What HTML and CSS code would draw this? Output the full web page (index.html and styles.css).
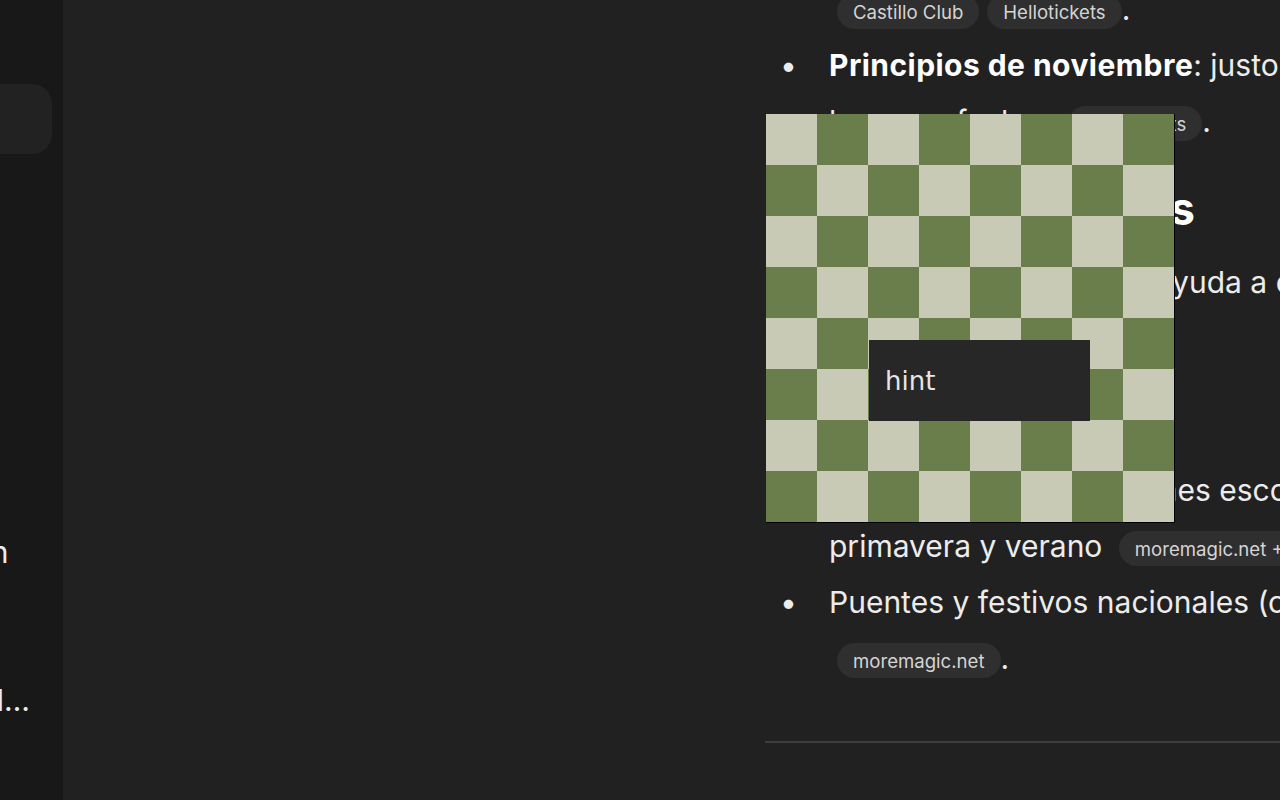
FILE: index.html
```html
<!DOCTYPE html>
<html lang="es">
<head>
<meta charset="utf-8">
<title>Chat</title>
<link rel="stylesheet" href="styles.css">
</head>
<body>
<div class="app">
  <aside class="sidebar">
    <div class="side-top"></div>
    <div class="side-item active">Chats</div>
    <div class="history">
      <div class="side-item">Organización</div>
      <div class="side-item">Ideas</div>
      <div class="side-item">Resumen del viaje a Madrid en octubre</div>
    </div>
  </aside>
  <main class="main">
    <div class="thread">
      <ul class="list">
        <li><div class="li-body"><strong>Finales de octubre</strong>: Halloween y eventos temáticos<br><span class="chip">Castillo Club</span><span class="chip">Hellotickets</span>.</div></li>
        <li><div class="li-body"><strong>Principios de noviembre</strong>: justo después de Halloween, hay menos gente en<br>las once fechas <span class="chip">Hellotickets</span>.</div></li>
      </ul>
      <h2 class="heading">Mejores momentos</h2>
      <p class="para">Reservarlas con antelación ayuda a evitar las colas más largas y<br>conseguir mejores precios.</p>
      <p class="para"><strong>Evita, si puedes:</strong></p>
      <ul class="list">
        <li><div class="li-body">Semana Santa, vacaciones escolares de<br>primavera y verano <span class="chip">moremagic.net +1</span></div></li>
        <li><div class="li-body">Puentes y festivos nacionales (como el 12 de octubre o el 6 de diciembre)<br><span class="chip">moremagic.net</span>.</div></li>
      </ul>
      <div class="rule"></div>
    </div>
  </main>
  <div class="board">
    <div class="hint">hint</div>
  </div>
</div>
</body>
</html>
```

FILE: styles.css
```css
*, *::before, *::after { box-sizing: border-box; }
html, body { margin: 0; height: 100%; }
body {
  background: #212121;
  color: #ececec;
  font-family: Inter, "Noto Sans", sans-serif;
  overflow: hidden;
}
.app {
  display: flex;
  height: 800px;
  position: relative;
  overflow: hidden;
}
.sidebar {
  flex: 0 0 260px;
  width: 260px;
  margin-left: -197px;
  background: #181818;
  font-size: 30px;
}
.side-top { height: 84px; }
.side-item {
  height: 74px;
  line-height: 74px;
  margin: 0 11px 0 10px;
  padding: 0 21px 0 8px;
  border-radius: 20px;
  white-space: nowrap;
  overflow: hidden;
  text-overflow: ellipsis;
}
.side-item.active {
  height: 70px;
  line-height: 70px;
  background: #222222;
}
.history { margin-top: 361px; }
.main {
  flex: 1;
  min-width: 0;
  padding-left: 702px;
  overflow: hidden;
}
.thread {
  margin-top: -75px;
  font-size: 30px;
  line-height: 56px;
  white-space: nowrap;
}
.list { list-style: none; margin: 0; padding: 0; }
.list li { display: flex; }
.list li::before {
  content: "\2022";
  flex: 0 0 64px;
  padding-left: 15px;
}
strong { font-weight: 700; color: #ffffff; letter-spacing: 0.45px; }
.chip {
  display: inline-flex;
  align-items: center;
  height: 35px;
  padding: 0 16px;
  margin-left: 8px;
  border-radius: 18px;
  background: #2f2f2f;
  color: #d4d4d4;
  font-size: 18.6px;
  line-height: 1;
  vertical-align: middle;
}
.heading {
  font-size: 45px;
  font-weight: 700;
  line-height: 60px;
  letter-spacing: 0.55px;
  margin: 30px 0 15px;
  color: #ffffff;
}
.para { margin: 0 0 20px; }
.rule {
  border-top: 2px solid #3d3d3d;
  margin-top: 55px;
}
.board {
  position: absolute;
  left: 766px;
  top: 114px;
  width: 409px;
  height: 409px;
  border-right: 1px solid #000;
  border-bottom: 1px solid #000;
  background: repeating-conic-gradient(#697e4b 0 25%, #c8cab5 0 50%) 0 0 / 102px 102px;
  padding: 226px 0 0 103px;
}
.hint {
  width: 221px;
  height: 81px;
  background: #272727;
  color: #e6e6e6;
  font-family: "DejaVu Sans", sans-serif;
  font-size: 26px;
  line-height: 30px;
  padding: 26px 0 0 16px;
}
```
